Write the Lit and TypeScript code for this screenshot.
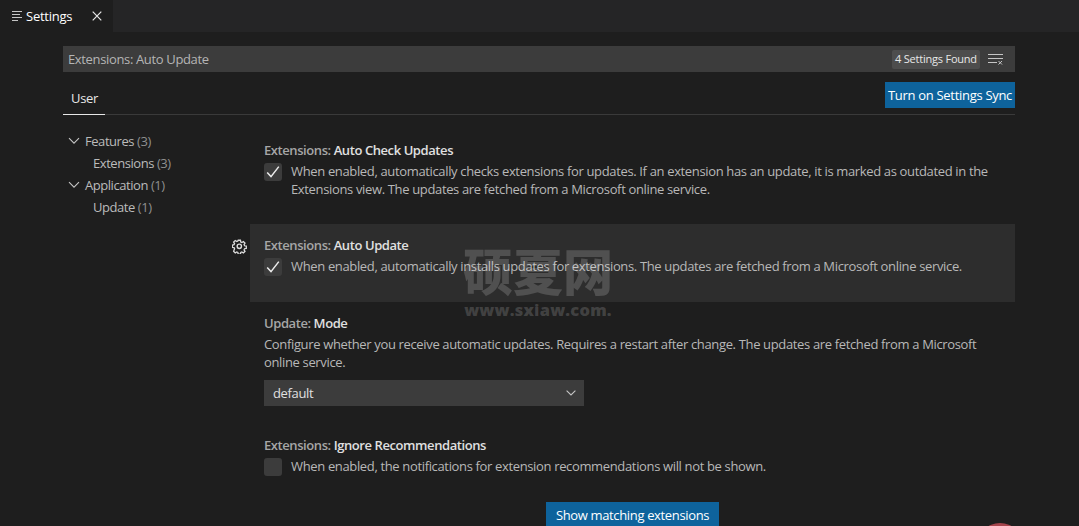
import { LitElement, html, css, svg } from "lit";
import { customElement } from "lit/decorators.js";

const check = html`<svg class="tick" viewBox="0 0 16 16" width="16" height="16"><path d="M2.200 8.600 L6 12.600 L13.800 2.600" fill="none" stroke="#ececec" stroke-width="1.500"/></svg>`;
const chev = html`<svg class="chev" viewBox="0 0 12 8" width="12" height="8"><path d="M1 1.200 L6 6.200 L11 1.200" fill="none" stroke="#c5c5c5" stroke-width="1.100"/></svg>`;
const smallChev = html`<svg class="small" viewBox="0 0 10 6" width="10" height="6"><path d="M.6.6 L5 5 L9.400.6" fill="none" stroke="#c5c5c5" stroke-width="1.100"/></svg>`;
const gear = svg`<path d="M6.200 .8h2.600l.4 2 1.300.6 1.700-1.100 1.900 1.900-1.100 1.700.6 1.300 2 .4v2.600l-2 .4-.6 1.300 1.100 1.700-1.900 1.900-1.700-1.100-1.300.6-.4 2H6.200l-.4-2-1.300-.6-1.700 1.100-1.900-1.900L2 10.700l-.6-1.300-2-.4V6.400l2-.4L2 4.700.9 3l1.900-1.900 1.700 1.100 1.300-.6z" transform="translate(.9 .6) scale(.92)" fill="none" stroke="#dcdcdc" stroke-width="1.500"/><circle cx="7.800" cy="7.800" r="2.300" fill="none" stroke="#dcdcdc" stroke-width="1.500"/>`;

@customElement("app-root")
export class AppRoot extends LitElement {
  static styles = css`
    :host { display: block; position: relative; width: 1079px; height: 526px; overflow: hidden; background: #1e1e1e; color: #ccc; font: 13px/18px "Open Sans", "Noto Sans", sans-serif; letter-spacing: -.35px; }
    .tabbar { display: flex; height: 32px; background: #252526; }
    .tab { display: flex; align-items: center; width: 113px; background: #1e1e1e; color: #fff; padding-left: 12px; box-sizing: border-box; }
    .tab-icon { margin-right: 4px; }
    .tab-title { width: 66px; font-size: 13px; letter-spacing: -.25px; }
    .main { padding: 14px 64px 0 63px; }
    .search { display: flex; align-items: center; height: 26px; background: #3c3c3c; padding-left: 5px; color: #b5b5b5; }
    .search-text { flex: 1; }
    .badge { display: flex; align-items: center; height: 19px; width: 88px; justify-content: center; background: #4d4d4d; color: #e8e8e8; font-size: 11px; border-radius: 2px; letter-spacing: -.22px; }
    .clear { margin: 0 12px 0 8px; display: block; }
    .header { display: flex; justify-content: space-between; height: 32px; margin-top: 10px; border-bottom: 1px solid #3a3a3a; }
    .user { align-self: flex-end; width: 42px; height: 25px; box-sizing: border-box; margin-bottom: -1px; border-bottom: 1px solid #e7e7e7; padding-left: 8px; color: #e7e7e7; line-height: 16px; }
    .sync { background: #0e639c; color: #fff; width: 130px; height: 26px; line-height: 26px; text-align: center; letter-spacing: -.3px; }
    .body { display: grid; grid-template-columns: 187px 765px; }
    .tree { padding-top: 15px; letter-spacing: -.45px; }
    .node { display: flex; align-items: center; height: 22px; color: #bbb; }
    .node .count { color: #8f8f8f; margin-left: 3px; }
    .node.l1 { padding-left: 5px; }
    .node.l2 { padding-left: 30px; }
    .chev { margin-right: 5px; }
    .list { padding-top: 14px; }
    .row { position: relative; padding: 12px 14px 26px; }
    .row.hover { background: #2d2d2d; }
    .title { color: #a6a6a6; font-weight: 600; height: 18px; letter-spacing: -.42px; }
    .title b { color: #e0e0e0; font-weight: 600; }
    .line { display: flex; margin-top: 3px; }
    .box { flex: none; width: 18px; height: 18px; margin: 1px 9px 0 0; background: #3c3c3c; border-radius: 3px; display: flex; align-items: center; justify-content: center; }
    .desc { color: #b8b8b8; }
    .plain { color: #b8b8b8; margin-top: 3px; }
    .gear { position: absolute; left: -18px; top: 15px; }
    .select { display: flex; align-items: center; justify-content: space-between; width: 320px; height: 26px; margin-top: 9px; background: #3c3c3c; color: #e0e0e0; padding: 0 8px 0 9px; box-sizing: border-box; }
    .row.r3 { padding-bottom: 18px; }
    .row.r4 { padding-bottom: 26px; }
    .match { display: block; margin: 0 auto; width: 173px; height: 26px; line-height: 26px; text-align: center; background: #0e639c; color: #fff; }
    .wm { position: absolute; left: 463px; top: 239px; width: 150px; color: rgba(255,255,255,.17); pointer-events: none; text-align: center; letter-spacing: 0; }
    .wm-cn { font: 900 50px/60px "Noto Sans CJK SC", sans-serif; white-space: nowrap; }
    .wm-url { font: 800 16.500px/20px "Open Sans", sans-serif; margin-top: 1px; white-space: nowrap; letter-spacing: .2px; }
    .dot { position: absolute; left: 977px; top: 523px; width: 46px; height: 46px; border-radius: 50%; background: #a5444c; }
  `;

  render() {
    return html`
      <div class="tabbar">
        <div class="tab">
          <svg class="tab-icon" width="10" height="10" viewBox="0 0 10 10"><path d="M0 .5h10M0 3.500h8M0 6.500h10M0 9.500h6" stroke="#c5c5c5" stroke-width="1"/></svg>
          <span class="tab-title">Settings</span>
          <svg width="10" height="10" viewBox="0 0 10 10"><path d="M.7.7l8.600 8.600M9.300.7L.7 9.300" stroke="#e8e8e8" stroke-width="1.200"/></svg>
        </div>
      </div>
      <div class="main">
        <div class="search">
          <span class="search-text">Extensions: Auto Update</span>
          <span class="badge">4 Settings Found</span>
          <svg class="clear" width="15" height="12" viewBox="0 0 15 12"><path d="M0 1.500h15M0 5.500h15M0 9.500h9" stroke="#c5c5c5"/><path d="M10.500 8l3.500 3.500M14 8l-3.500 3.500" stroke="#c5c5c5"/></svg>
        </div>
        <div class="header">
          <div class="user">User</div>
          <div class="sync">Turn on Settings Sync</div>
        </div>
        <div class="body">
          <div class="tree">
            <div class="node l1">${chev}Features<span class="count">(3)</span></div>
            <div class="node l2">Extensions<span class="count">(3)</span></div>
            <div class="node l1">${chev}Application<span class="count">(1)</span></div>
            <div class="node l2">Update<span class="count">(1)</span></div>
          </div>
          <div class="list">
            <div class="row">
              <div class="title">Extensions: <b>Auto Check Updates</b></div>
              <div class="line"><span class="box">${check}</span><span class="desc">When enabled, automatically checks extensions for updates. If an extension has an update, it is marked as outdated in the Extensions view. The updates are fetched from a Microsoft online service.</span></div>
            </div>
            <div class="row hover">
              <svg class="gear" width="15" height="15" viewBox="0 0 16 16">${gear}</svg>
              <div class="title">Extensions: <b>Auto Update</b></div>
              <div class="line"><span class="box">${check}</span><span class="desc">When enabled, automatically installs updates for extensions. The updates are fetched from a Microsoft online service.</span></div>
            </div>
            <div class="row r3">
              <div class="title">Update: <b>Mode</b></div>
              <div class="plain">Configure whether you receive automatic updates. Requires a restart after change. The updates are fetched from a Microsoft online service.</div>
              <div class="select"><span>default</span>${smallChev}</div>
            </div>
            <div class="row r4">
              <div class="title">Extensions: <b>Ignore Recommendations</b></div>
              <div class="line"><span class="box"></span><span class="desc">When enabled, the notifications for extension recommendations will not be shown.</span></div>
            </div>
            <div class="match">Show matching extensions</div>
          </div>
        </div>
      </div>
      <div class="wm"><div class="wm-cn">硕夏网</div><div class="wm-url">www.sxiaw.com.</div></div>
      <div class="dot"></div>
    `;
  }
}
